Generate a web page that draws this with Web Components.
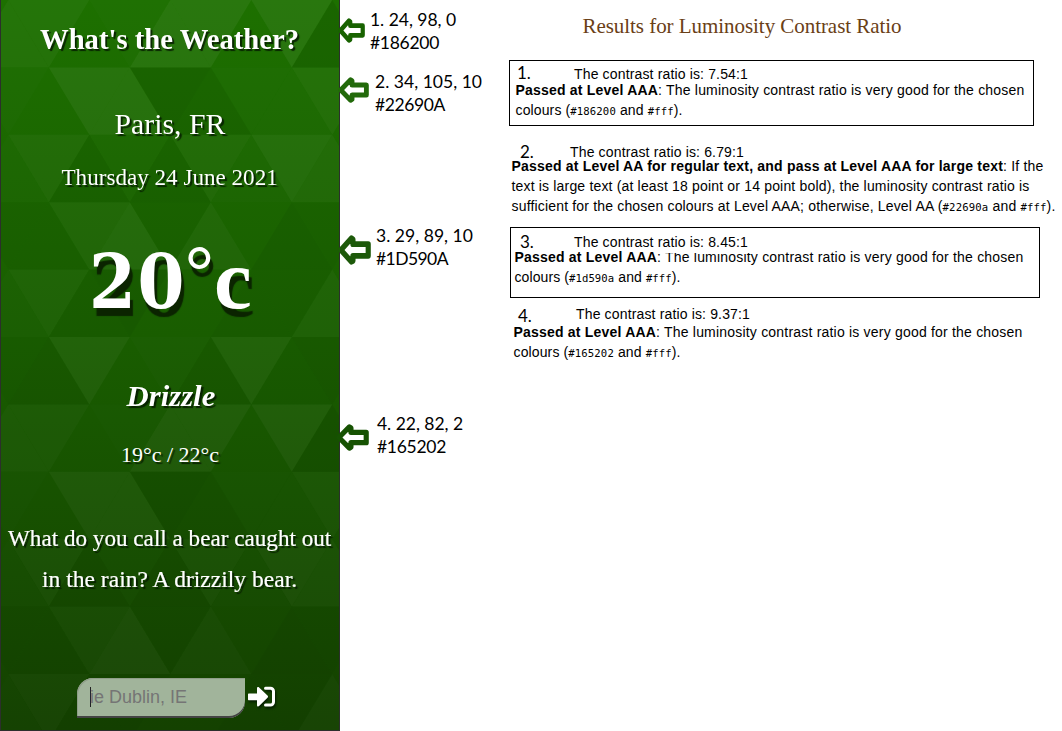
<!DOCTYPE html>
<html lang="en">
<head>
<meta charset="utf-8">
<title>Weather contrast report</title>
<style>
body{margin:0;background:#fff;color:#000;overflow:hidden}
</style>
</head>
<body>
<contrast-report></contrast-report>
<script>
const mount=(el,html)=>{el.attachShadow({mode:'open'}).innerHTML=html;};

/* Page: weather panel, colour notes, contrast results */
customElements.define('contrast-report',class extends HTMLElement{
  constructor(){super();mount(this,`
<style>
:host{display:grid;grid-template-columns:340px 169px 553px;height:731px;overflow:hidden}
.notes{position:relative;z-index:1}
h1{margin:14px 0 0 73.500px;font:21px/24px "Liberation Serif",serif;color:#6a4016;height:46px}
b{font-weight:700}
code{font:10.600px/1 "DejaVu Sans Mono",monospace}
</style>
<weather-panel></weather-panel>
<div class="notes">
<colour-note color="#186200" style="--top:8px;--left:-2px;--arrow:27px;--gap:5px;--ay:10px;--ah:25px"><fit-line w="86">1. 24, 98, 0</fit-line><fit-line w="69">#186200</fit-line></colour-note>
<colour-note color="#22690a" style="--top:16px;--left:-2px;--arrow:31px;--gap:6px;--ay:7px;--ah:26px"><fit-line w="107">2. 34, 105, 10</fit-line><fit-line w="70">#22690A</fit-line></colour-note>
<colour-note color="#1d590a" style="--top:108px;--left:-2px;--arrow:33px;--gap:5px;--ay:11px;--ah:30px"><fit-line w="97">3. 29, 89, 10</fit-line><fit-line w="72">#1D590A</fit-line></colour-note>
<colour-note color="#165202" style="--top:142px;--left:-4px;--arrow:33px;--gap:8px;--ay:12px;--ah:27px"><fit-line w="86">4. 22, 82, 2</fit-line><fit-line w="69">#165202</fit-line></colour-note>
</div>
<main>
<h1><fit-line w="319">Results for Luminosity Contrast Ratio</fit-line></h1>
<contrast-result boxed n="1." ratio="7.54:1" style="width:525px;height:66px;--pad:6px;--nx:7px;--ny:-1px;--hx:64px;--hh:14px;--bx:5.500px">
<fit-line w="509"><b>Passed at Level AAA</b>: The luminosity contrast ratio is very good for the chosen</fit-line><fit-line w="167">colours (<code>#186200</code> and <code>#fff</code>).</fit-line></contrast-result>
<contrast-result n="2." ratio="6.79:1" style="margin-top:18px;height:83px;--pad:0px;--nx:11px;--ny:0px;--hx:61px;--hh:12px;--bx:2.500px">
<fit-line w="532"><b>Passed at Level AA for regular text, and pass at Level AAA for large text</b>: If the</fit-line><fit-line w="518">text is large text (at least 18 point or 14 point bold), the luminosity contrast ratio is</fit-line><fit-line w="544">sufficient for the chosen colours at Level AAA; otherwise, Level AA (<code>#22690a</code> and <code>#fff</code>).</fit-line></contrast-result>
<contrast-result boxed clipped n="3." ratio="8.45:1" style="margin:0 0 0 1px;width:530px;height:71px;--pad:7px;--nx:9px;--ny:0px;--hx:63px;--hh:13px;--bx:3.500px">
<fit-line w="509"><b>Passed at Level AAA</b>: The luminosity contrast ratio is very good for the chosen</fit-line><fit-line w="166">colours (<code>#1d590a</code> and <code>#fff</code>).</fit-line></contrast-result>
<contrast-result n="4." ratio="9.37:1" style="margin-top:8px;--pad:0px;--nx:9px;--ny:2px;--hx:67px;--hh:16px;--bx:4.500px">
<fit-line w="509"><b>Passed at Level AAA</b>: The luminosity contrast ratio is very good for the chosen</fit-line><fit-line w="167">colours (<code>#165202</code> and <code>#fff</code>).</fit-line></contrast-result>
</main>`);}
});

/* Phone-sized weather screen */
customElements.define('weather-panel',class extends HTMLElement{
  constructor(){super();mount(this,`
<style>
:host{display:grid;height:731px;width:340px;box-sizing:border-box;overflow:hidden;font-family:"Liberation Serif",serif;color:#fff;text-shadow:2px 2px 1px rgba(5,25,0,.85)}
triangle-field,.content{grid-area:1/1}
.content{display:flex;flex-direction:column;align-items:center;padding-top:19px;height:712px;position:relative;box-sizing:content-box}
.title{font-size:30px;font-weight:700;line-height:40px}
.city{font-size:29px;line-height:40px;margin-top:45px}
.date{font-size:23px;line-height:30px;margin-top:19px}
.temp{display:flex;align-items:baseline;align-self:flex-start;margin-left:89px;height:80px;line-height:80px;margin-top:46px;margin-bottom:2px;font-weight:700;text-shadow:3px 8px 1px #0b2400}
.num{font-family:"DejaVu Serif Condensed","DejaVu Serif",serif;font-stretch:condensed;font-size:75px}
.deg{font-size:72px;position:relative;top:-13px;margin-left:-1px}
.unit{font-size:85px;font-weight:700}
.sky{font-size:29px;font-weight:700;font-style:italic;line-height:40px;margin-top:55px;margin-left:2px}
.range{font-size:22px;line-height:30px;margin-top:24px}
.joke{font-size:23px;line-height:41px;margin-top:48px;-webkit-text-stroke:.2px #fff}
.joke+.joke{margin-top:0}
.search{display:flex;align-items:center;gap:3px;margin:78px 0 0 12px}
.field{box-sizing:border-box;width:168px;height:40px;border-radius:16px 0 16px 0;background:#a1b49b;box-shadow:inset 0 -2px #444,inset 1px 1px #8f9e89;padding:0 0 2px 13px;display:flex;align-items:center;color:#757575;text-shadow:none;font:18px/38px "Liberation Sans",sans-serif}
.caret{width:1px;height:20px;background:#222;margin-right:-.5px}
svg{filter:drop-shadow(1px 2px 1px rgba(0,20,0,.8));display:block;margin-top:-2px}
</style>
<triangle-field></triangle-field>
<div class="content">
<fit-line class="title" w="259" stretch>What's the Weather?</fit-line>
<fit-line class="city" w="111" stretch>Paris, FR</fit-line>
<fit-line class="date" w="216" stretch>Thursday 24 June 2021</fit-line>
<div class="temp"><fit-line class="num" w="97">20</fit-line><fit-line class="deg" w="29">°</fit-line><fit-line class="unit" w="38">c</fit-line></div>
<fit-line class="sky" w="89" stretch>Drizzle</fit-line>
<fit-line class="range" w="98" stretch>19°c / 22°c</fit-line>
<fit-line class="joke" w="323" stretch>What do you call a bear caught out</fit-line>
<fit-line class="joke" w="255" stretch>in the rain? A drizzily bear.</fit-line>
<div class="search"><div class="field"><span class="caret"></span><fit-line w="97">ie Dublin, IE</fit-line></div>
<svg width="28" height="22" viewBox="0 0 28 22" fill="#fff"><path d="M1 7.500h8V2.300c0-1.400 1.200-1.700 2.100-.9l8.400 8.200c.7.700.7 1.500 0 2.200l-8.400 8.300c-.9.900-2.100.5-2.100-.8v-5H1c-.7 0-1-.4-1-1V8.500c0-.6.300-1 1-1z"/><path d="M17.500 2.200H22.500a3 3 0 0 1 3 3V16a3 3 0 0 1-3 3H17.500" fill="none" stroke="#fff" stroke-width="3" stroke-linecap="round"/></svg></div>
</div>`);}
});

/* Triangular wallpaper: six rows of tones, repeated down the panel.
   Even rows begin with an upright triangle, odd rows with an inverted one. */
customElements.define('triangle-field',class extends HTMLElement{
  constructor(){super();
    const tones=['446355650','365501334','341314354','224524612','342166224','215631521'];
    const alpha=[-.09,-.06,-.03,.015,.04,.06,0];
    const S=81,H=67.4;let out='';
    for(let r=0;r<11;r++){
      const t=tones[r%6],y=r*H,b=y+H,odd=r%2;
      for(let i=0;i<9;i++){
        const a=alpha[t[i]]*(.9-.045*r),x=-32.2+i*S/2;
        const up=odd?i%2:!(i%2);
        const p=up?[x,b,x+S,b,x+S/2,y]:[x,y,x+S,y,x+S/2,b];
        out+='<polygon points="'+p.map(v=>v.toFixed(1)).join(' ')+'" fill="'+(a<0?'#000':'#fff')+'" fill-opacity="'+Math.abs(a).toFixed(3)+'"/>';
      }
    }
    mount(this,`
<style>:host{display:block;box-sizing:border-box;width:340px;height:731px;background:linear-gradient(#1d7000,#195d00 46%,#144100);border:1px solid #2c2f2c;border-top:0;overflow:hidden}svg{display:block;margin-left:-1px}</style>
<svg width="340" height="731">${out}</svg>`);}
});

/* Outlined arrow with a sampled colour */
customElements.define('colour-note',class extends HTMLElement{
  connectedCallback(){if(this.shadowRoot)return;mount(this,`
<style>
:host{display:flex;align-items:flex-start;gap:var(--gap);height:46px;margin-top:var(--top);margin-left:var(--left);font:17.500px/23px Lato,sans-serif}
svg{width:var(--arrow);height:var(--ah);margin-top:var(--ay);flex:none}
</style>
<svg viewBox="0 0 32 26" preserveAspectRatio="none"><path d="M2.800 13 13 2.800l1.500 1V8H29.300V18H14.500v4.400l-1.500.8Z" fill="#fff" stroke="${this.getAttribute('color')}" stroke-width="5" stroke-linejoin="round"/></svg>
<div><slot></slot></div>`);}
});

/* One verdict, optionally framed */
customElements.define('contrast-result',class extends HTMLElement{
  connectedCallback(){if(this.shadowRoot)return;mount(this,`
<style>
:host{display:block;box-sizing:border-box;padding-top:var(--pad);font:14px/20px "Liberation Sans",sans-serif;position:relative}
:host([boxed]){border:1px solid #000;padding-top:calc(var(--pad) - 1px)}
.head{display:flex;height:var(--hh);line-height:16px}
.n{box-sizing:border-box;width:var(--hx);padding-left:var(--nx);margin-top:var(--ny);font:17px/16px Lato,sans-serif;white-space:nowrap}
.body{padding-left:var(--bx)}
.mask{display:none}
:host([clipped]) .mask{display:block;position:absolute;left:153px;top:20px;width:118px;height:5px;background:#fff}
</style>
<div class="head"><span class="n">${this.getAttribute('n')}</span><fit-line w="174">The contrast ratio is: ${this.getAttribute('ratio')}</fit-line></div>
<div class="body"><slot></slot></div><i class="mask"></i>`);}
});

/* Single line set to a measure: tracked by default, scaled with [stretch] */
customElements.define('fit-line',class extends HTMLElement{
  connectedCallback(){
    if(!this.shadowRoot)mount(this,'<style>:host{display:block;width:max-content;white-space:nowrap}</style><slot></slot>');
    const n=this.textContent.length,w=+this.getAttribute('w'),own=this.offsetWidth;
    if(this.hasAttribute('stretch'))this.style.transform='scaleX('+w/own+')';
    else this.style.letterSpacing=((w-this.getBoundingClientRect().width)/n)+'px';
  }
});
</script>
</body>
</html>
